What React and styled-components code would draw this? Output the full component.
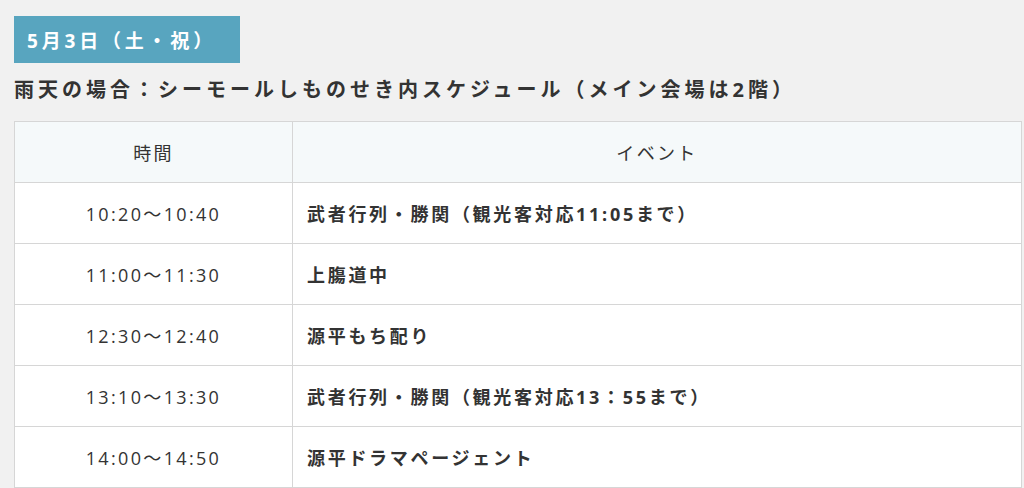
import React from 'react';
import styled, { createGlobalStyle } from 'styled-components';

const GlobalStyle = createGlobalStyle`
  html, body {
    margin: 0;
    padding: 0;
    background: #f1f1f1;
  }
  body {
    font-family: "Open Sans", "Noto Sans CJK JP", sans-serif;
    color: #333;
  }
`;

const Page = styled.div`
  padding: 16px 2px 0 14px;
  height: 488px;
  box-sizing: border-box;
  overflow: hidden;
`;

const DayBadge = styled.h2`
  display: inline-flex;
  align-items: center;
  height: 47px;
  margin: 0;
  padding: 0 24px 0 13px;
  box-sizing: border-box;
  background: #58a5bf;
  color: #fff;
  font-size: 19px;
  font-weight: 700;
  letter-spacing: 0.2em;
`;

const Heading = styled.h3`
  margin: 14px 0 18px;
  font-size: 20px;
  font-weight: 700;
  line-height: 26px;
  letter-spacing: 0.2em;
  color: #333;
`;

const Table = styled.table`
  width: 100%;
  border-collapse: collapse;
  background: #fff;
  table-layout: fixed;
`;

const Cell = styled.td`
  height: 60px;
  padding: 0 14px;
  border: 1px solid #d6d6d6;
  font-size: 18px;
  letter-spacing: ${(p) => (p.$center ? '0.13em' : '0.15em')};
  font-weight: ${(p) => (p.$bold ? 700 : 400)};
  text-align: ${(p) => (p.$center ? 'center' : 'left')};
  color: #333;
`;

const HeadCell = styled(Cell).attrs({ as: 'th' })`
  background: #f5f9fa;
  font-weight: 400;
  text-align: center;
  letter-spacing: 0.13em;
`;

const schedule = [
  ['10:20～10:40', '武者行列・勝関（観光客対応11:05まで）'],
  ['11:00～11:30', '上膓道中'],
  ['12:30～12:40', '源平もち配り'],
  ['13:10～13:30', '武者行列・勝関（観光客対応13：55まで）'],
  ['14:00～14:50', '源平ドラマページェント'],
];

const App = () => (
  <>
    <GlobalStyle />
    <Page>
      <DayBadge>5月3日（土・祝）</DayBadge>
      <Heading>雨天の場合：シーモールしものせき内スケジュール（メイン会場は2階）</Heading>
      <Table>
        <colgroup>
          <col style={{ width: '278px' }} />
          <col />
        </colgroup>
        <thead>
          <tr>
            <HeadCell>時間</HeadCell>
            <HeadCell>イベント</HeadCell>
          </tr>
        </thead>
        <tbody>
          {schedule.map(([time, event]) => (
            <tr key={time}>
              <Cell $center>{time}</Cell>
              <Cell $bold>{event}</Cell>
            </tr>
          ))}
        </tbody>
      </Table>
    </Page>
  </>
);

export default App;
